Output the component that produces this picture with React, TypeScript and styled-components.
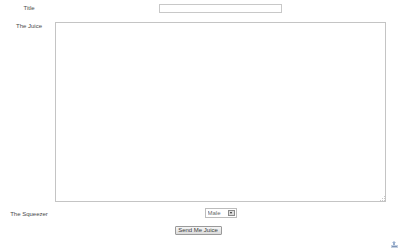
import React from 'react';
import styled, { createGlobalStyle } from 'styled-components';

const GlobalStyle = createGlobalStyle`
    html, body {
        margin: 0;
        padding: 0;
        background: #ffffff;
    }
    body {
        font-family: "Liberation Sans", Arial, sans-serif;
        font-size: 6px;
        color: #555555;
    }
`

const Page = styled.form`
    width: 400px;
    height: 250px;
    box-sizing: border-box;
    padding-top: 4px;
    display: flex;
    flex-direction: column;
    position: relative;
`

const Row = styled.div<{ $gap: number }>`
    display: flex;
    align-items: flex-start;
    width: 386px;
    margin-bottom: ${p => p.$gap}px;
`

const Label = styled.label<{ $top: number }>`
    width: 58px;
    flex: none;
    text-align: center;
    padding-top: ${p => p.$top}px;
    line-height: 8px;
    font-family: "Liberation Sans", Arial, sans-serif;
    font-size: 6px;
    color: #4a4a4a;
`

const Field = styled.div<{ $shift: number }>`
    flex: 1;
    display: flex;
    justify-content: center;
    margin-left: ${p => p.$shift}px;
`

const TextInput = styled.input`
    width: 123px;
    height: 9px;
    box-sizing: border-box;
    border: 1px solid #c8c8c8;
    padding: 0 2px;
    font-size: 6px;
    font-family: "Liberation Sans", Arial, sans-serif;
    outline: none;
`

const AreaWrap = styled.div`
    position: relative;
    display: flex;
`

const JuiceArea = styled.textarea`
    width: 331px;
    height: 180px;
    box-sizing: border-box;
    border: 1px solid #c4c4c4;
    resize: none;
    font-size: 6px;
    font-family: "Liberation Sans", Arial, sans-serif;
    padding: 2px;
    margin: 0;
    outline: none;
`

const Grip = styled.div`
    position: absolute;
    right: 1px;
    bottom: 1px;
    width: 5px;
    height: 5px;
    display: flex;
`

const SelectBox = styled.div`
    display: flex;
    align-items: stretch;
    width: 32px;
    height: 10px;
    box-sizing: border-box;
    border: 1px solid #bcbcbc;
    background: #ffffff;
`

const Select = styled.select`
    appearance: none;
    -webkit-appearance: none;
    border: none;
    background: transparent;
    flex: 1;
    min-width: 0;
    padding: 0 0 0 2px;
    font-size: 6px;
    font-family: "Liberation Sans", Arial, sans-serif;
    color: #6a6a6a;
    outline: none;
`

const Arrow = styled.span`
    width: 7px;
    margin: 1px;
    display: flex;
    align-items: center;
    justify-content: center;
    background: #dcdcdc;
    border: 1px solid #8a8a8a;
    box-sizing: border-box;
    &::after {
        content: '';
        border-left: 1.5px solid transparent;
        border-right: 1.5px solid transparent;
        border-top: 2px solid #222222;
    }
`

const ButtonRow = styled.div`
    width: 396px;
    display: flex;
    justify-content: center;
`

const Button = styled.button`
    width: 47px;
    height: 9px;
    padding: 0;
    box-sizing: border-box;
    border: 1px solid #9a9a9a;
    border-radius: 1px;
    background: linear-gradient(#f6f6f6, #dadada);
    font-size: 6px;
    font-family: "Liberation Sans", Arial, sans-serif;
    color: #3c3c3c;
    line-height: 7px;
`

const Corner = styled.div`
    position: absolute;
    right: 2px;
    bottom: 2px;
    width: 7px;
    height: 7px;
    display: flex;
`

const App: React.FC = () => {
    const HandlerSubmit = (e: React.FormEvent<HTMLFormElement>) => {
        e.preventDefault();
    }

    return (<>
        <GlobalStyle />
        <Page onSubmit={(e) => HandlerSubmit(e)}>
            <Row $gap={9}>
                <Label $top={0}>Title</Label>
                <Field $shift={-3}><TextInput type='text' /></Field>
            </Row>
            <Row $gap={6}>
                <Label $top={0}>The Juice</Label>
                <Field $shift={-3}>
                    <AreaWrap>
                        <JuiceArea />
                        <Grip>
                            <svg width='5' height='5' viewBox='0 0 5 5'>
                                <rect x='4' y='0' width='1' height='1' fill='#c8c8c8' />
                                <rect x='2' y='2' width='1' height='1' fill='#c8c8c8' />
                                <rect x='4' y='2' width='1' height='1' fill='#c8c8c8' />
                                <rect x='0' y='4' width='1' height='1' fill='#c8c8c8' />
                                <rect x='2' y='4' width='1' height='1' fill='#c8c8c8' />
                                <rect x='4' y='4' width='1' height='1' fill='#c8c8c8' />
                            </svg>
                        </Grip>
                    </AreaWrap>
                </Field>
            </Row>
            <Row $gap={8}>
                <Label $top={2}>The Squeezer</Label>
                <Field $shift={-3}>
                    <SelectBox>
                        <Select defaultValue='Male'>
                            <option>Male</option>
                            <option>Female</option>
                        </Select>
                        <Arrow />
                    </SelectBox>
                </Field>
            </Row>
            <ButtonRow>
                <Button type='submit'>Send Me Juice</Button>
            </ButtonRow>
            <Corner>
                <svg width='7' height='7' viewBox='0 0 7 7'>
                    <path d='M3 0 L5 2 L4 2 L4 4 L2 4 L2 2 L1 2 Z' fill='#9ab0cf' />
                    <rect x='0' y='4' width='7' height='3' fill='#c3cfe0' />
                    <rect x='1' y='5' width='5' height='1' fill='#7f96b8' />
                </svg>
            </Corner>
        </Page>
    </>)
}

export default App;
